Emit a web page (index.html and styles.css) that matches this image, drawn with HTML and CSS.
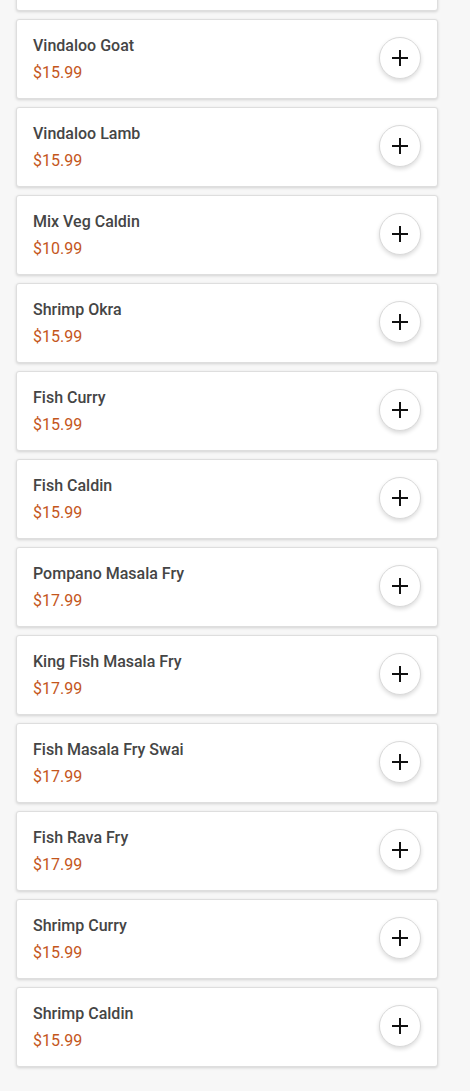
FILE: index.html
```html
<!DOCTYPE html>
<html>
<head>
  <title>Menu</title>
  <link rel="stylesheet" href="styles.css">
</head>
<body>
  <div class="menu-list">
    <div class="item-card"></div>

    <div class="item-card">
      <div class="item-info">
        <div class="item-name">Vindaloo Goat</div>
        <div class="item-price">$15.99</div>
      </div>
      <button class="add-button"><svg width="18" height="18" viewBox="0 0 18 18"><path d="M9 1v16M1 9h16" stroke="#111" stroke-width="2"/></svg></button>
    </div>

    <div class="item-card">
      <div class="item-info">
        <div class="item-name">Vindaloo Lamb</div>
        <div class="item-price">$15.99</div>
      </div>
      <button class="add-button"><svg width="18" height="18" viewBox="0 0 18 18"><path d="M9 1v16M1 9h16" stroke="#111" stroke-width="2"/></svg></button>
    </div>

    <div class="item-card">
      <div class="item-info">
        <div class="item-name">Mix Veg Caldin</div>
        <div class="item-price">$10.99</div>
      </div>
      <button class="add-button"><svg width="18" height="18" viewBox="0 0 18 18"><path d="M9 1v16M1 9h16" stroke="#111" stroke-width="2"/></svg></button>
    </div>

    <div class="item-card">
      <div class="item-info">
        <div class="item-name">Shrimp Okra</div>
        <div class="item-price">$15.99</div>
      </div>
      <button class="add-button"><svg width="18" height="18" viewBox="0 0 18 18"><path d="M9 1v16M1 9h16" stroke="#111" stroke-width="2"/></svg></button>
    </div>

    <div class="item-card">
      <div class="item-info">
        <div class="item-name">Fish Curry</div>
        <div class="item-price">$15.99</div>
      </div>
      <button class="add-button"><svg width="18" height="18" viewBox="0 0 18 18"><path d="M9 1v16M1 9h16" stroke="#111" stroke-width="2"/></svg></button>
    </div>

    <div class="item-card">
      <div class="item-info">
        <div class="item-name">Fish Caldin</div>
        <div class="item-price">$15.99</div>
      </div>
      <button class="add-button"><svg width="18" height="18" viewBox="0 0 18 18"><path d="M9 1v16M1 9h16" stroke="#111" stroke-width="2"/></svg></button>
    </div>

    <div class="item-card">
      <div class="item-info">
        <div class="item-name">Pompano Masala Fry</div>
        <div class="item-price">$17.99</div>
      </div>
      <button class="add-button"><svg width="18" height="18" viewBox="0 0 18 18"><path d="M9 1v16M1 9h16" stroke="#111" stroke-width="2"/></svg></button>
    </div>

    <div class="item-card">
      <div class="item-info">
        <div class="item-name">King Fish Masala Fry</div>
        <div class="item-price">$17.99</div>
      </div>
      <button class="add-button"><svg width="18" height="18" viewBox="0 0 18 18"><path d="M9 1v16M1 9h16" stroke="#111" stroke-width="2"/></svg></button>
    </div>

    <div class="item-card">
      <div class="item-info">
        <div class="item-name">Fish Masala Fry Swai</div>
        <div class="item-price">$17.99</div>
      </div>
      <button class="add-button"><svg width="18" height="18" viewBox="0 0 18 18"><path d="M9 1v16M1 9h16" stroke="#111" stroke-width="2"/></svg></button>
    </div>

    <div class="item-card">
      <div class="item-info">
        <div class="item-name">Fish Rava Fry</div>
        <div class="item-price">$17.99</div>
      </div>
      <button class="add-button"><svg width="18" height="18" viewBox="0 0 18 18"><path d="M9 1v16M1 9h16" stroke="#111" stroke-width="2"/></svg></button>
    </div>

    <div class="item-card">
      <div class="item-info">
        <div class="item-name">Shrimp Curry</div>
        <div class="item-price">$15.99</div>
      </div>
      <button class="add-button"><svg width="18" height="18" viewBox="0 0 18 18"><path d="M9 1v16M1 9h16" stroke="#111" stroke-width="2"/></svg></button>
    </div>

    <div class="item-card">
      <div class="item-info">
        <div class="item-name">Shrimp Caldin</div>
        <div class="item-price">$15.99</div>
      </div>
      <button class="add-button"><svg width="18" height="18" viewBox="0 0 18 18"><path d="M9 1v16M1 9h16" stroke="#111" stroke-width="2"/></svg></button>
    </div>
  </div>
</body>
</html>
```

FILE: styles.css
```css
body {
  font-family: Roboto, "Liberation Sans", sans-serif;
  background-color: #f7f7f7;
  margin: 0;
  padding: 0;
}

.menu-list {
  display: flex;
  flex-direction: column;
  gap: 8px;
  margin-top: -69px;
  padding: 0 32px 24px 16px;
}

.item-card {
  display: flex;
  align-items: center;
  justify-content: space-between;
  height: 80px;
  box-sizing: border-box;
  padding: 0 16px;
  background-color: white;
  border: 1px solid #dedede;
  border-radius: 3px;
  box-shadow: 0 1px 3px rgba(0,0,0,0.15);
}

.item-name {
  color: #454545;
  font-size: 16px;
  font-weight: 500;
  line-height: 24px;
  margin-bottom: 3px;
}

.item-price {
  color: #c4561c;
  font-size: 16px;
  line-height: 24px;
}

.add-button {
  width: 42px;
  height: 42px;
  margin-bottom: 3px;
  border-radius: 50%;
  border: 1px solid #dadada;
  background-color: white;
  box-shadow: 0 2px 4px rgba(0,0,0,0.15);
  display: flex;
  align-items: center;
  justify-content: center;
  padding: 0;
  cursor: pointer;
}
```
